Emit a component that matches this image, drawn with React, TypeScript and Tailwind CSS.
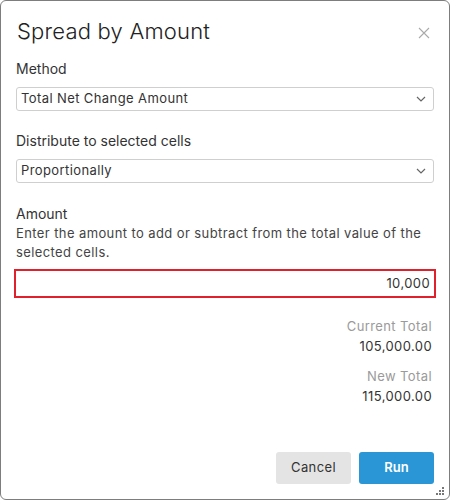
import React from "react";

function Chevron() {
  return (
    <svg width="10" height="6" viewBox="0 0 10 6" className="shrink-0">
      <path d="M1 1 L5 5 L9 1" fill="none" stroke="#666" strokeWidth="1.2" />
    </svg>
  );
}

function Select({ value }: { value: string }) {
  return (
    <div className="flex h-[24px] items-center justify-between rounded-[3px] border border-[#cfcfcf] bg-white pl-[4px] pr-[7px] text-[13px] tracking-[0.4px] text-[#333]">
      <span>{value}</span>
      <Chevron />
    </div>
  );
}

export default function App() {
  return (
    <div
      className="relative h-[500px] w-[450px] overflow-hidden rounded-[6px] border border-[#7d7d7d] bg-white text-[#333]"
      style={{ fontFamily: "Inter, 'Noto Sans', sans-serif" }}
    >
      <div className="flex items-start justify-between pl-[16px] pr-[19px] pt-[15px]">
        <h1 className="text-[22px] leading-[30px] font-light tracking-[0.2px] text-[#222]">Spread by Amount</h1>
        <svg width="12" height="12" viewBox="0 0 12 12" className="mt-[11px]">
          <path d="M1 1 L11 11 M11 1 L1 11" stroke="#aaa" strokeWidth="1.1" />
        </svg>
      </div>

      <div className="px-[15px]">
        <div className="mt-[13px] text-[14px] leading-[20px]">Method</div>
        <div className="mt-[8px]">
          <Select value="Total Net Change Amount" />
        </div>

        <div className="mt-[20px] text-[14px] leading-[20px]">Distribute to selected cells</div>
        <div className="mt-[8px]">
          <Select value="Proportionally" />
        </div>

        <div className="mt-[21px] text-[14px] leading-[20px]">Amount</div>
        <p className="mt-[0px] text-[13px] leading-[19px] tracking-[0.4px] text-[#444]">
          Enter the amount to add or subtract from the total value of the selected cells.
        </p>
        <div className="-mx-[2px] mt-[7px] flex h-[29px] items-center justify-end border-2 border-[#e0202a] px-[4px] text-[13px] tracking-[0.4px] text-[#333]">
          10,000
        </div>

        <div className="mt-[18px] flex flex-col items-end pr-[2px] text-[13px] tracking-[0.4px]">
          <div className="leading-[20px] text-[#9a9a9a]">Current Total</div>
          <div className="leading-[20px] text-[#333]">105,000.00</div>
          <div className="mt-[10px] leading-[20px] text-[#9a9a9a]">New Total</div>
          <div className="leading-[20px] text-[#333]">115,000.00</div>
        </div>
      </div>

      <div className="absolute bottom-[15px] right-[15px] flex gap-[8px]">
        <button className="h-[32px] w-[75px] rounded-[3px] bg-[#e4e4e4] text-[13px] tracking-[0.4px] text-[#333]">Cancel</button>
        <button className="h-[32px] w-[75px] rounded-[3px] bg-[#2a96d6] text-[13px] font-semibold text-white">Run</button>
      </div>

      <svg width="8" height="8" viewBox="0 0 8 8" className="absolute bottom-[4px] right-[5px]">
        <rect x="6" y="0" width="2" height="2" fill="#777" />
        <rect x="3" y="3" width="2" height="2" fill="#777" />
        <rect x="6" y="3" width="2" height="2" fill="#777" />
        <rect x="0" y="6" width="2" height="2" fill="#777" />
        <rect x="3" y="6" width="2" height="2" fill="#777" />
        <rect x="6" y="6" width="2" height="2" fill="#777" />
      </svg>
    </div>
  );
}
